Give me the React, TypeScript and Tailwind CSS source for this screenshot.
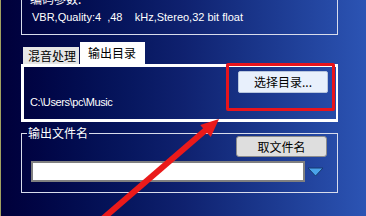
import React from "react";

const cjk = { fontFamily: '"Noto Sans CJK SC", "Liberation Sans", sans-serif' };
const lat = { fontFamily: '"Liberation Sans", "Noto Sans CJK SC", sans-serif' };

export default function App() {
  return (
    <div className="relative w-[366px] h-[216px] overflow-hidden flex bg-linear-to-r from-[#00003a] via-[#0f216f] to-[#2c54b4]">
      <div className="w-px shrink-0 bg-[#a0a060]" />
      <div className="ml-[20px] w-[317px] flex flex-col text-white">
        <fieldset className="mt-[-7px] h-[42px] border border-[#d8dcec] pl-[7px] min-w-0">
          <legend className="px-px text-[12px] leading-[12px]" style={cjk}>编码参数:</legend>
          <div className="mt-[6px] ml-[3px] text-[11px] leading-[13px] whitespace-pre" style={lat}>
            {"VBR,Quality:4  ,48    kHz,Stereo,32 bit float"}
          </div>
        </fieldset>

        <div className="mt-[7px] ml-[2px] h-[22px] flex items-end text-black text-[12px]" style={cjk}>
          <div className="w-[56px] h-[17px] bg-[#e6e6e6] pl-[5px] leading-[17px]">混音处理</div>
          <div className="ml-px w-[65px] h-[22px] bg-white pl-[8px] leading-[21px]">输出目录</div>
        </div>

        <div className="h-[58px] border-[3px] border-r-2 border-white flex flex-col">
          <div className="flex justify-end pt-[4px] pr-[8px]">
            <button className="w-[90px] h-[22px] bg-[#e8f0fc] border border-[#b8c6de] rounded-[2px] text-black text-[12px] leading-[20px]" style={cjk}>
              选择目录...
            </button>
          </div>
          <div className="mt-[3px] pl-[6px] text-[11px] leading-[13px] tracking-[-0.4px]" style={lat}>C:\Users\pc\Music</div>
        </div>

        <fieldset className="mt-[5px] h-[66px] border border-[#d8dcec] pl-[5px] pr-[10px] min-w-0">
          <legend className="px-px text-[12px] leading-[12px]" style={cjk}>输出文件名</legend>
          <div className="mt-[-3px] flex justify-end">
            <button className="w-[91px] h-[21px] bg-[#dedede] border border-[#8c8c8c] rounded-[3px] text-black text-[12px] leading-[19px]" style={cjk}>
              取文件名
            </button>
          </div>
          <div className="mt-[4px] ml-[4px] flex items-center">
            <div className="w-[274px] h-[21px] bg-white border-2 border-[#808080]" />
            <svg width="17" height="10" viewBox="0 0 17 10" className="ml-[2px]">
              <polygon points="1,1 16,1 8.5,9" fill="#4aa3ea" stroke="#163a70" strokeWidth="1" />
            </svg>
          </div>
        </fieldset>
      </div>

      <div className="absolute left-[226px] top-[63px] w-[109px] h-[48px] border-[3px] border-[#e8141c] rounded-[2px]" />

      <svg className="absolute left-0 top-0" width="366" height="216" viewBox="0 0 366 216">
        <line x1="92" y1="228" x2="208" y2="128" stroke="#ea1a1a" strokeWidth="6" />
        <polygon points="219,119 200.2,124.9 210.8,136.9" fill="#ea1a1a" />
      </svg>
    </div>
  );
}
